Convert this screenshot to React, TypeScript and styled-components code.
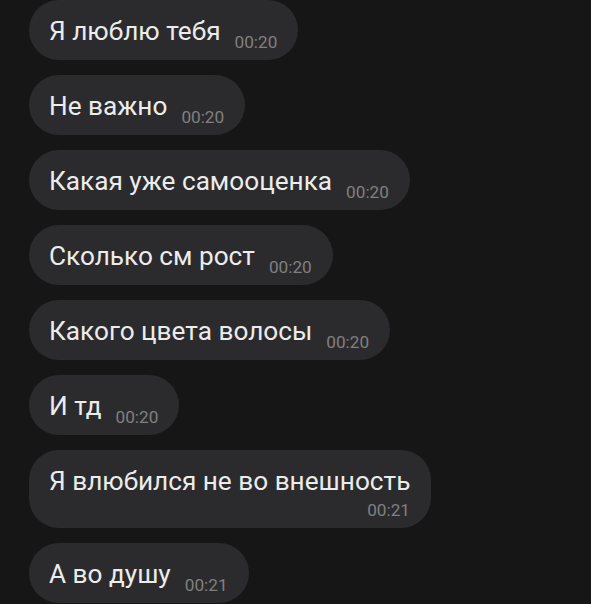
import React from "react";
import styled, { createGlobalStyle } from "styled-components";

const Global = createGlobalStyle`
  html, body {
    margin: 0;
    padding: 0;
    background: #161616;
  }
  body {
    font-family: Roboto, "Noto Sans", "Liberation Sans", sans-serif;
    -webkit-font-smoothing: antialiased;
  }
`;

const Chat = styled.div`
  display: flex;
  flex-direction: column;
  align-items: flex-start;
  gap: 15px;
  padding: 0 0 0 29px;
  width: 591px;
  height: 604px;
  box-sizing: border-box;
  overflow: hidden;
  background: #161616;
`;

const Bubble = styled.div<{ $stacked?: boolean }>`
  display: flex;
  flex-direction: ${(p) => (p.$stacked ? "column" : "row")};
  align-items: flex-end;
  max-width: 402px;
  box-sizing: border-box;
  padding: 0 21px 9px 20px;
  background: #2b2b2d;
  border-radius: 30px;
`;

const Text = styled.span`
  align-self: flex-start;
  padding-top: 16px;
  margin-bottom: 5px;
  font-size: 26.2px;
  line-height: 30px;
  color: #ececec;
  white-space: nowrap;
`;

const Time = styled.span<{ $stacked?: boolean }>`
  margin-left: ${(p) => (p.$stacked ? "0" : "14px")};
  font-size: 17.2px;
  line-height: 18px;
  color: #808080;
  white-space: nowrap;
`;

const messages: { text: string; time: string; stacked?: boolean }[] = [
  { text: "Я люблю тебя", time: "00:20" },
  { text: "Не важно", time: "00:20" },
  { text: "Какая уже самооценка", time: "00:20" },
  { text: "Сколько см рост", time: "00:20" },
  { text: "Какого цвета волосы", time: "00:20" },
  { text: "И тд", time: "00:20" },
  { text: "Я влюбился не во внешность", time: "00:21", stacked: true },
  { text: "А во душу", time: "00:21" },
];

export default function App() {
  return (
    <>
      <Global />
      <Chat>
        {messages.map((m, i) => (
          <Bubble key={i} $stacked={m.stacked}>
            <Text>{m.text}</Text>
            <Time $stacked={m.stacked}>{m.time}</Time>
          </Bubble>
        ))}
      </Chat>
    </>
  );
}
